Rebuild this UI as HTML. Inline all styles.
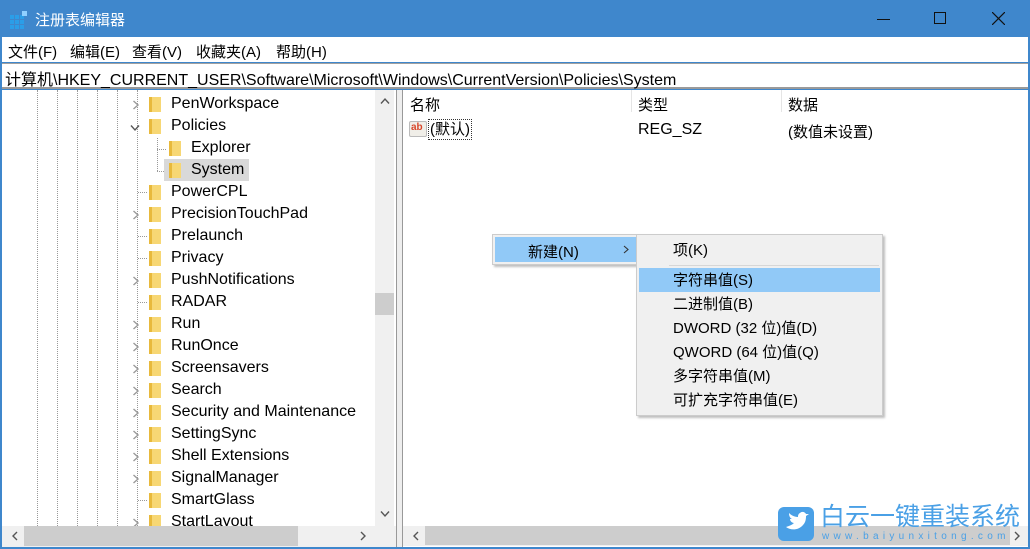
<!DOCTYPE html>
<html style="overflow:hidden;width:1030px;height:549px"><head><meta charset="utf-8"><style>
*{margin:0;padding:0;box-sizing:border-box}
body{width:1030px;height:549px;overflow:hidden;background:#3f87cc;font-family:"Liberation Sans","Noto Sans CJK SC",sans-serif;font-size:15px;color:#000;position:relative}
.a{position:absolute}
.title{left:0;top:0;width:1030px;height:37px;background:#3f87cc}
.menu{left:2px;top:37px;width:1026px;height:25px;background:#fff}
.menu span{position:absolute;top:4px}
.addr{left:2px;top:63px;width:1026px;height:26px;background:#fff;border-top:1px solid #a0a0a0;border-bottom:2px solid #9a9a9a;padding:2px 3px;white-space:nowrap;font-size:16px}
.tree{left:2px;top:90px;width:394px;height:457px;background:#fff;overflow:hidden}
.split{left:396px;top:90px;width:7px;height:457px;background:#eee;border-left:1px solid #999;border-right:1px solid #999}
.right{left:403px;top:90px;width:625px;height:457px;background:#fff}
.row{position:absolute;height:22px;line-height:22px;white-space:nowrap;font-size:16px}
.fold{position:absolute;width:12px;height:15px;top:4px;background:linear-gradient(90deg,#e8b93c 0 3px,#f7d774 3px)}
.vl{position:absolute;top:0;width:0;height:436px;border-left:1px dotted #999}
.mi{position:absolute;left:36px;height:24px;line-height:24px}
</style></head><body>
<div class="a title">
<svg class="a" style="left:10px;top:11px" width="18" height="18"><g fill="#2b9ee8"><rect x="0" y="4" width="4" height="4"/><rect x="5" y="4" width="4" height="4"/><rect x="10" y="4" width="4" height="4"/><rect x="0" y="9" width="4" height="4"/><rect x="5" y="9" width="4" height="4"/><rect x="10" y="9" width="4" height="4"/><rect x="0" y="14" width="4" height="4"/><rect x="5" y="14" width="4" height="4"/><rect x="10" y="14" width="4" height="4"/><rect x="12" y="0" width="5" height="5" fill="#8fd0ff"/></g></svg>
<span class="a" style="left:35px;top:9px;color:#fff;font-size:15px">注册表编辑器</span>
<div class="a" style="left:877px;top:19px;width:13px;height:1px;background:#111"></div>
<div class="a" style="left:934px;top:12px;width:12px;height:12px;border:1px solid #111"></div>
<svg class="a" style="left:992px;top:12px" width="13" height="13"><path d="M0 0L13 13M13 0L0 13" stroke="#111" stroke-width="1.2"/></svg>
</div>
<div class="a menu"><span style="left:6px">文件(F)</span><span style="left:68px">编辑(E)</span><span style="left:130px">查看(V)</span><span style="left:194px">收藏夹(A)</span><span style="left:274px">帮助(H)</span></div>
<div class="a addr">计算机\HKEY_CURRENT_USER\Software\Microsoft\Windows\CurrentVersion\Policies\System</div>
<div class="a tree">
<div class="vl" style="left:35px"></div><div class="vl" style="left:55px"></div><div class="vl" style="left:75px"></div><div class="vl" style="left:95px"></div><div class="vl" style="left:115px"></div><div class="vl" style="left:135px"></div>
<div class="vl" style="left:155px;top:48px;height:33px"></div>
<div class="a" style="left:155px;top:59px;width:9px;border-top:1px dotted #999"></div>
<div class="a" style="left:155px;top:81px;width:9px;border-top:1px dotted #999"></div>
<div class="row" style="top:3px;left:0;width:370px">
<svg class="a" style="left:130px;top:7px" width="8" height="10"><path d="M1.5 1L6 5 1.5 9" fill="none" stroke="#999" stroke-width="1.4"/></svg><div class="fold" style="left:147px"></div><span class="a" style="left:169px">PenWorkspace</span></div>
<div class="row" style="top:25px;left:0;width:370px"><svg class="a" style="left:128px;top:9px" width="10" height="8"><path d="M1 1.5L5 6 9 1.5" fill="none" stroke="#555" stroke-width="1.4"/></svg><div class="fold" style="left:147px"></div><span class="a" style="left:169px">Policies</span></div>
<div class="row" style="top:47px;left:0;width:370px"><div class="fold" style="left:167px"></div><span class="a" style="left:189px">Explorer</span></div>
<div class="row" style="top:69px;left:162px;width:85px;background:#d9d9d9"><div class="fold" style="left:5px"></div><span class="a" style="left:27px">System</span></div>
<div id="rest"></div>
<div class="a" style="left:373px;top:0;width:19px;height:436px;background:#f0f0f0"><svg class="a" style="left:5px;top:7px" width="10" height="8"><path d="M1 6.5L5 2 9 6.5" fill="none" stroke="#555" stroke-width="1.4"/></svg><div class="a" style="left:0;top:203px;width:19px;height:22px;background:#cdcdcd"></div><svg class="a" style="left:5px;top:420px" width="10" height="8"><path d="M1 1.5L5 6 9 1.5" fill="none" stroke="#555" stroke-width="1.4"/></svg></div>
<div class="a" style="left:0;top:436px;width:394px;height:21px;background:#f0f0f0"><svg class="a" style="left:9px;top:5px" width="8" height="10"><path d="M6 1L2 5 6 9" fill="none" stroke="#555" stroke-width="1.4"/></svg><div class="a" style="left:22px;top:0;width:274px;height:20px;background:#cdcdcd"></div><svg class="a" style="left:357px;top:5px" width="8" height="10"><path d="M2 1L6 5 2 9" fill="none" stroke="#555" stroke-width="1.4"/></svg></div>
</div>
<div class="a split"></div>
<div class="a right">
<div class="a" style="left:0;top:0;width:625px;height:24px">
<span class="a" style="left:7px;top:4px">名称</span><div class="a" style="left:228px;top:0;width:1px;height:22px;background:#e5e5e5"></div>
<span class="a" style="left:235px;top:4px">类型</span><div class="a" style="left:378px;top:0;width:1px;height:22px;background:#e5e5e5"></div>
<span class="a" style="left:385px;top:4px">数据</span></div>
<div class="a" style="left:6px;top:31px;width:18px;height:16px;background:#f0eee8;border:1px solid #bbb;border-radius:2px;font-size:10px;font-weight:bold;color:#d8462a;line-height:12px;padding-left:1px">ab</div>
<span class="a" style="left:25px;top:29px;border:1px dotted #333;padding:0 1px;line-height:19px">(默认)</span>
<span class="a" style="left:235px;top:31px;font-size:16px">REG_SZ</span><span class="a" style="left:385px;top:31px">(数值未设置)</span>
<div class="a" style="left:0;top:436px;width:625px;height:20px;background:#f0f0f0"><svg class="a" style="left:9px;top:5px" width="8" height="10"><path d="M6 1L2 5 6 9" fill="none" stroke="#555" stroke-width="1.4"/></svg><div class="a" style="left:22px;top:0;width:585px;height:19px;background:#cdcdcd"></div><svg class="a" style="left:610px;top:5px" width="8" height="10"><path d="M2 1L6 5 2 9" fill="none" stroke="#555" stroke-width="1.4"/></svg></div>
</div>
<div class="a" style="left:492px;top:234px;width:148px;height:31px;background:#f0f0f0;border:1px solid #ccc;box-shadow:2px 2px 2px rgba(0,0,0,.25)">
<div class="a" style="left:2px;top:2px;width:144px;height:25px;background:#91c9f7"></div>
<span class="a" style="left:35px;top:6px">新建(N)</span><svg class="a" style="left:130px;top:10px" width="6" height="9"><path d="M1 1L5 4.5 1 8" fill="none" stroke="#333" stroke-width="1.1"/></svg></div>
<div class="a" style="left:636px;top:234px;width:247px;height:182px;background:#f0f0f0;border:1px solid #ccc;box-shadow:2px 2px 2px rgba(0,0,0,.25)">
<div class="mi" style="top:4px">项(K)</div>
<div class="a" style="left:32px;top:30px;width:210px;height:1px;background:#d7d7d7"></div>
<div class="a" style="left:2px;top:33px;width:241px;height:24px;background:#91c9f7"></div>
<div class="mi" style="top:34px">字符串值(S)</div>
<div class="mi" style="top:58px">二进制值(B)</div>
<div class="mi" style="top:82px">DWORD (32 位)值(D)</div>
<div class="mi" style="top:106px">QWORD (64 位)值(Q)</div>
<div class="mi" style="top:130px">多字符串值(M)</div>
<div class="mi" style="top:154px">可扩充字符串值(E)</div>
</div>
<div class="a" style="left:778px;top:507px;width:36px;height:34px;background:#4aa0e6;border-radius:6px"><svg width="36" height="34"><path d="M8 20c4 3 12 4 17-2 3-3 3-7 3-9l3-2-3 0c-1-2-4-3-6-1-2 1-2 3-2 4-4 0-7-2-9-4 0 3 1 5 3 6l-2 0c0 2 2 4 4 4-2 2-5 3-8 4z" fill="#fff"/></svg></div>
<span class="a" style="left:820px;top:503px;font-size:25px;color:#4aa0e6;line-height:28px;white-space:nowrap">白云一键重装系统</span>
<span class="a" style="left:822px;top:531px;font-size:10px;color:#4aa0e6;letter-spacing:4.3px;white-space:nowrap;line-height:12px">www.baiyunxitong.com</span>
<script>
var items=[["PowerCPL",0],["PrecisionTouchPad",1],["Prelaunch",0],["Privacy",0],["PushNotifications",1],["RADAR",0],["Run",1],["RunOnce",1],["Screensavers",1],["Search",1],["Security and Maintenance",1],["SettingSync",1],["Shell Extensions",1],["SignalManager",1],["SmartGlass",0],["StartLayout",1]];
var h="";items.forEach(function(it,i){var t=91+i*22;h+='<div class="row" style="top:'+t+'px;left:0;width:370px">'+(it[1]?'<svg class="a" style="left:130px;top:7px" width="8" height="10"><path d="M1.5 1L6 5 1.5 9" fill="none" stroke="#999" stroke-width="1.4"/></svg>':'<div class="a" style="left:136px;top:11px;width:9px;border-top:1px dotted #999"></div>')+'<div class="fold" style="left:147px"></div><span class="a" style="left:169px">'+it[0]+'</span></div>';});
document.getElementById("rest").outerHTML=h;
</script>
</body></html>
